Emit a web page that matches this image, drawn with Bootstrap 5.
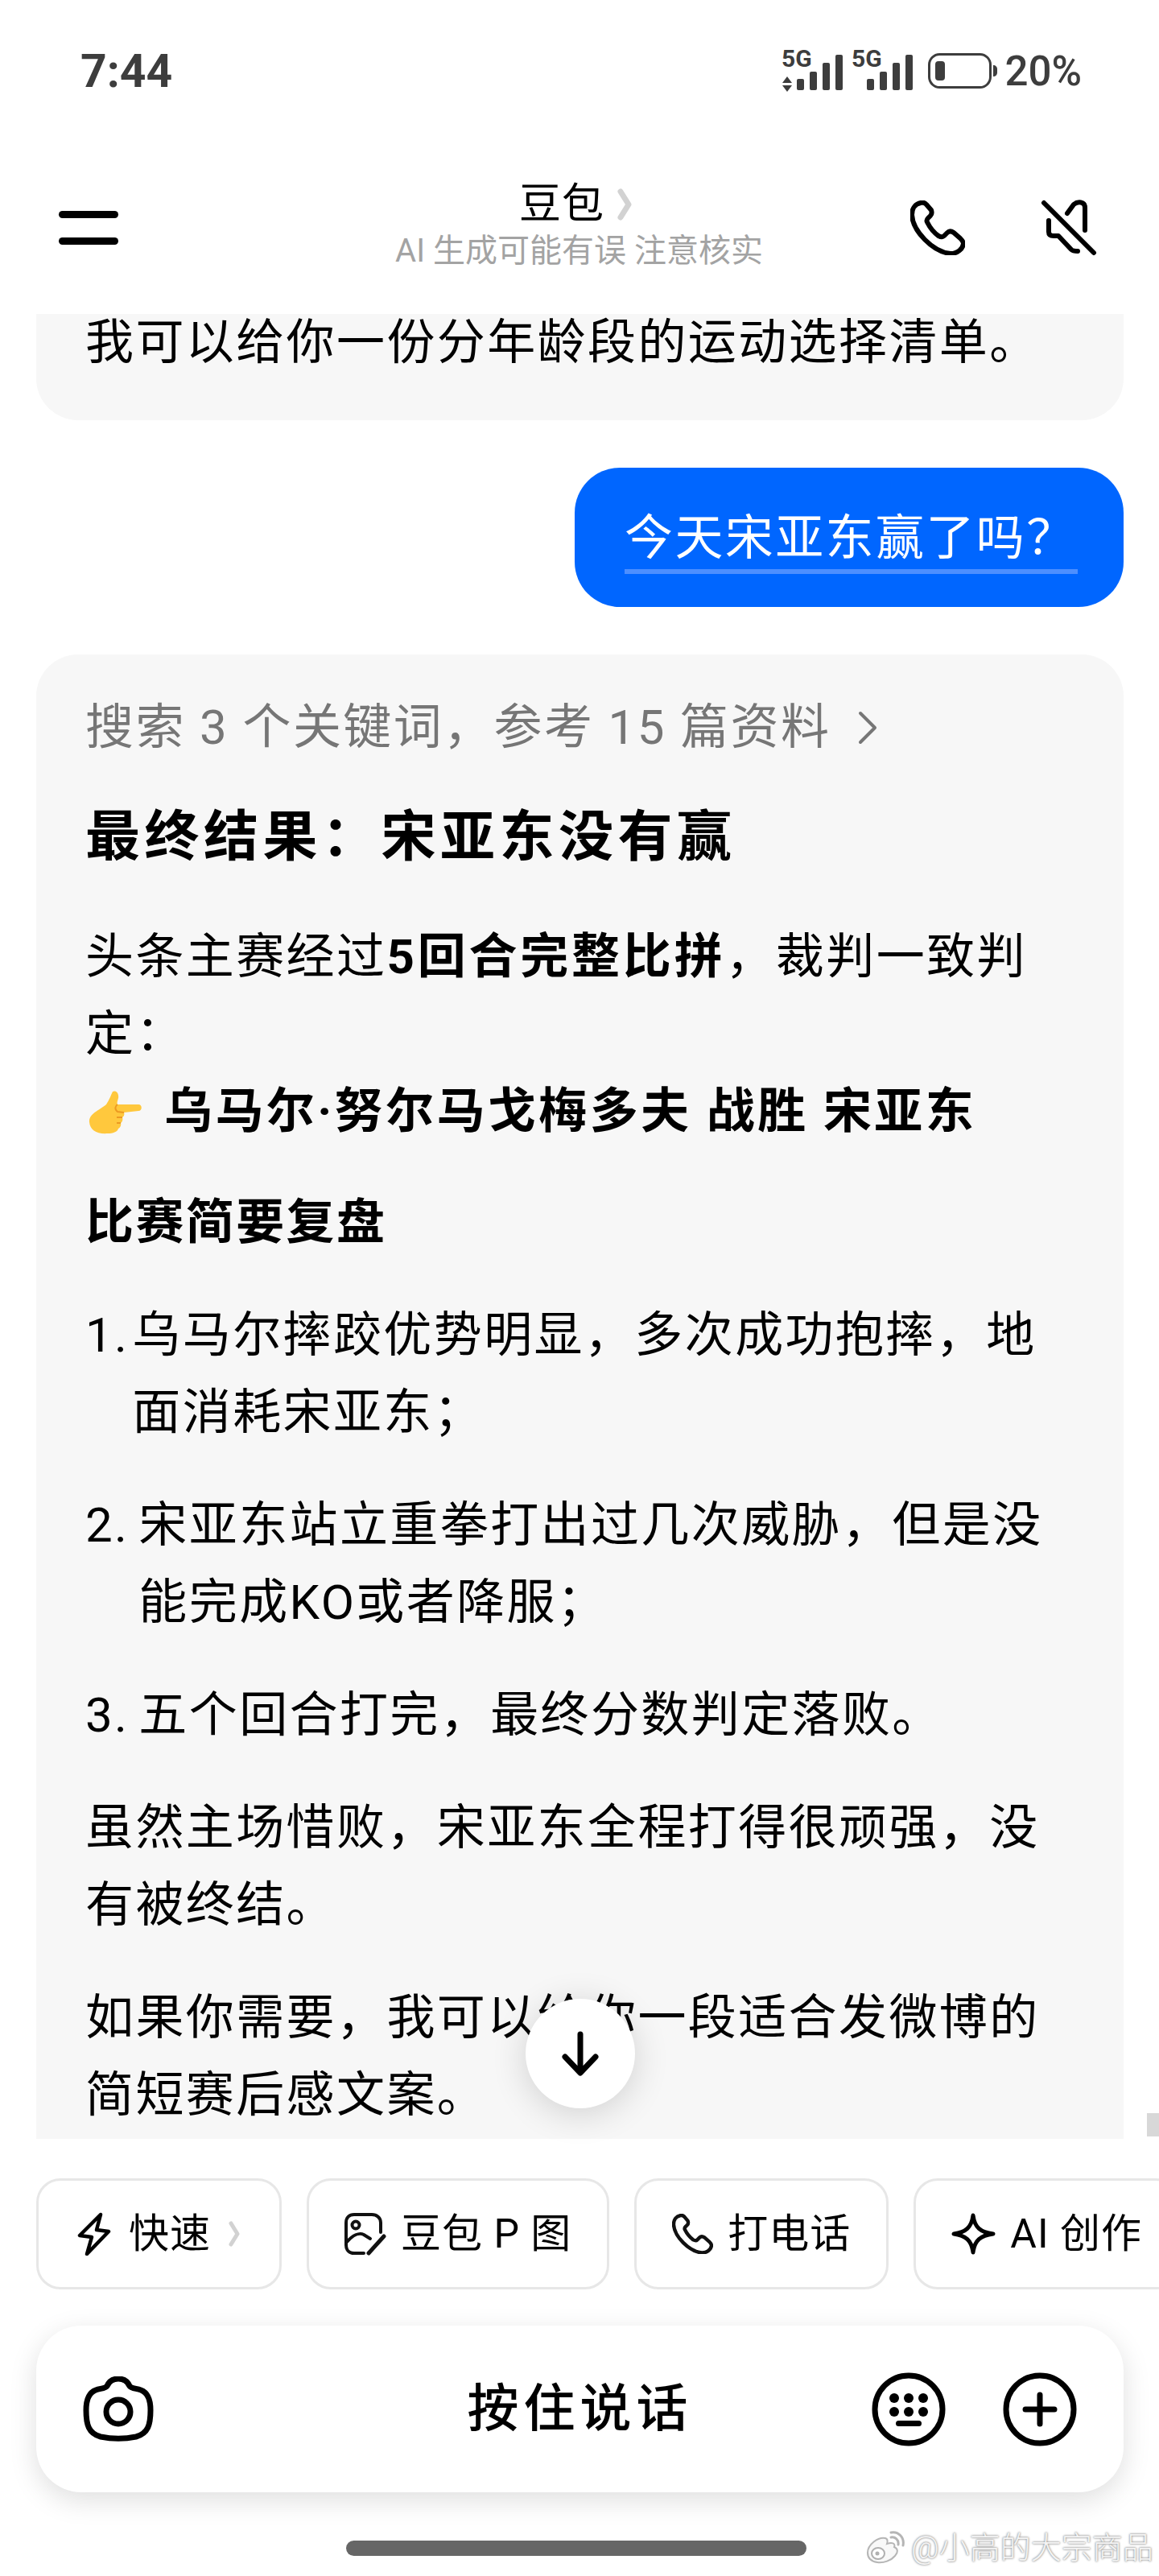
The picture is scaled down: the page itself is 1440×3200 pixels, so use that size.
<!DOCTYPE html>
<html lang="zh-CN">
<head>
    <meta charset="UTF-8">
    <meta name="viewport" content="width=device-width, initial-scale=1.0">
    <title>豆包</title>
    <link rel="stylesheet" href="https://cdn.jsdelivr.net/npm/bootstrap@5.3.0/dist/css/bootstrap.min.css">
    <script src="https://cdn.jsdelivr.net/npm/bootstrap@5.3.0/dist/js/bootstrap.bundle.min.js"></script>

    <style>
        body {
            margin: 0;
            background-color: #fff;
            color: #000;
            font-family: Roboto, "Noto Sans CJK SC", sans-serif;
        }

        .phone-page {
            width: 1440px;
            height: 3200px;
        }

        /* status bar */
        .status-row {
            height: 176px;
            padding: 0 96px 0 100px;
            color: #3d3d3d;
            font-family: Roboto, sans-serif;
        }

        .clock-text {
            font-size: 57px;
            font-weight: 700;
            line-height: 1;
        }

        .battery-text {
            font-size: 51px;
            font-weight: 500;
            line-height: 1;
            margin-left: 9px;
        }

        .signal-icon {
            margin: -8px 18px 0 0;
        }

        /* header */
        .top-header {
            height: 214px;
            padding: 0 77px 0 73px;
            display: grid;
            grid-template-columns: 1fr auto 1fr;
            align-items: center;
        }

        .menu-bar {
            width: 74px;
            height: 9px;
            background: #000;
            border-radius: 5px;
        }

        .menu-bar + .menu-bar {
            margin-top: 24px;
        }

        .title-text {
            font-size: 52px;
            line-height: 64px;
            letter-spacing: 1px;
            margin-top: -6px;
            padding-right: 6px;
        }

        .sub-text {
            font-size: 40px;
            line-height: 52px;
            color: #a3a3a3;
            white-space: nowrap;
            padding-left: 3px;
        }

        .header-actions {
            gap: 94px;
        }

        /* chat */
        .chat-area {
            flex: 1 1 0;
            min-height: 0;
            padding: 0 44px 0 45px;
        }

        .chat-text {
            font-size: 60px;
            line-height: 96px;
            letter-spacing: 2.4px;
        }

        .old-bubble {
            margin-top: -12px;
            padding: 0 61px 48px;
            background: #f7f7f7;
            border-radius: 0 0 52px 52px;
        }

        .me-bubble {
            margin-top: 59px;
            width: 682px;
            height: 173px;
            padding: 44px 0 0 62px;
            background: #0066ff;
            color: #fff;
            border-radius: 56px;
            line-height: 88px;
        }

        .me-bubble-line {
            width: 563px;
            height: 6px;
            background: #4d8fff;
            margin-top: -6px;
        }

        .ai-bubble {
            margin-top: 59px;
            padding: 43px 66px 80px 61px;
            background: #f7f7f7;
            border-radius: 52px;
        }

        .search-row {
            color: #767676;
            gap: 34px;
        }

        .result-title {
            font-size: 68px;
            font-weight: 700;
            line-height: 96px;
            letter-spacing: 5.5px;
            margin: 40px 0 53px;
        }

        .ai-para {
            margin: 0 0 44px;
        }

        .result-para {
            margin-bottom: 42px;
        }

        .bold-run {
            font-weight: 700;
            letter-spacing: 3.8px;
        }

        .winner-run {
            font-weight: 700;
            letter-spacing: 3.4px;
        }

        .ai-item {
            margin-bottom: 44px;
            gap: 12px;
        }

        .item-one {
            margin-right: -8px;
        }

        .emoji-hand {
            margin: 0 28px 0 4px;
            vertical-align: -8px;
        }

        /* overlays */
        .down-button {
            left: 653px;
            top: 2483px;
            width: 136px;
            height: 136px;
            background: #fff;
            box-shadow: 0 6px 44px rgba(0, 0, 0, .16);
            z-index: 2;
        }

        .scroll-thumb {
            left: 1425px;
            top: 2625px;
            width: 15px;
            height: 29px;
            background: #d8d8d8;
        }

        /* bottom */
        .bottom-tools {
            padding-bottom: 25px;
        }

        .tool-row {
            margin-top: 49px;
            padding-left: 45px;
            gap: 31px;
            height: 138px;
        }

        .tool-chip {
            flex: 0 0 auto;
            height: 138px;
            padding: 0 44px;
            gap: 18px;
            border: 3px solid #e7e7e7;
            border-radius: 30px;
            font-size: 50px;
            line-height: 1;
            letter-spacing: 1px;
            white-space: nowrap;
        }

        .chip-first {
            padding: 0 49px 0 48px;
            gap: 22px;
        }

        .input-bar {
            margin: 45px 44px 0 45px;
            height: 207px;
            padding: 0 58px;
            display: grid;
            grid-template-columns: 1fr auto 1fr;
            align-items: center;
            background: #fff;
            border-radius: 56px;
            box-shadow: 0 10px 34px rgba(0, 0, 0, .13);
        }

        .talk-text {
            font-size: 64px;
            font-weight: 500;
            letter-spacing: 6px;
            line-height: 1;
        }

        .input-actions {
            gap: 71px;
        }

        .home-pill {
            width: 572px;
            height: 19px;
            margin: 60px 0 0 430px;
            background: #666;
            border-radius: 10px;
        }

        .watermark {
            left: 1074px;
            top: 3142px;
            gap: 6px;
            font-size: 38px;
            line-height: 46px;
            font-weight: 300;
            color: #f4f4f4;
            text-shadow: 0 0 3px #8a8a8a, 0 0 2px #a0a0a0;
            white-space: nowrap;
        }
    </style>
</head>
<body>
    <div class="phone-page d-flex flex-column position-relative overflow-hidden">
        <!-- Status bar -->
        <div class="status-row d-flex align-items-center justify-content-between flex-shrink-0">
            <div class="clock-text">7:44</div>
            <div class="d-flex align-items-center">
                <svg class="signal-icon" width="164" height="60" viewBox="0 -8 164 60" fill="#3d3d3d">
                    <text x="0" y="21" font-family="Roboto, sans-serif" font-weight="700" font-size="30">5G</text>
                    <path d="M7 33 L13 41 H1 Z M1 44 H13 L7 52 Z"/>
                    <rect x="19" y="36" width="9" height="14" rx="2"/>
                    <rect x="35" y="27" width="9" height="23" rx="2"/>
                    <rect x="51" y="16" width="9" height="34" rx="2"/>
                    <rect x="67" y="6" width="9" height="44" rx="2"/>
                    <text x="87" y="21" font-family="Roboto, sans-serif" font-weight="700" font-size="30">5G</text>
                    <rect x="106" y="36" width="9" height="14" rx="2"/>
                    <rect x="122" y="27" width="9" height="23" rx="2"/>
                    <rect x="138" y="16" width="9" height="34" rx="2"/>
                    <rect x="154" y="6" width="9" height="44" rx="2"/>
                </svg>
                <svg width="86" height="44" viewBox="0 0 86 44">
                    <rect x="1.5" y="1.5" width="76" height="41" rx="13" fill="none" stroke="#3d3d3d" stroke-width="3"/>
                    <rect x="9" y="10" width="12" height="24" rx="4" fill="#3d3d3d"/>
                    <path d="M81 15 C84 15 86 17 86 20 V24 C86 27 84 29 81 29 Z" fill="#3d3d3d"/>
                </svg>
                <span class="battery-text">20%</span>
            </div>
        </div>

        <!-- Header -->
        <div class="top-header flex-shrink-0">
            <div>
                <div class="menu-bar"></div>
                <div class="menu-bar"></div>
            </div>
            <div class="text-center">
                <div class="title-text d-flex align-items-center justify-content-center gap-3">
                    <span>豆包</span>
                    <svg width="18" height="40" viewBox="0 0 18 40" fill="none" stroke="#d2d2d2" stroke-width="7" stroke-linecap="round" stroke-linejoin="round"><path d="M4 4 L14 20 L4 36"/></svg>
                </div>
                <div class="sub-text">AI 生成可能有误 注意核实</div>
            </div>
            <div class="header-actions d-flex justify-content-end align-items-center">
                <svg width="68" height="68" viewBox="0 0 68 68" fill="none" stroke="#000" stroke-width="6" stroke-linejoin="round">
                    <path d="M13 3 C7 4 2 9 2 18 C3 38 28 64 50 66 C59 66 65 60 66 54 C66 51 64 49 62 47 L54 40 C51 38 48 38 46 40 L42 44 C40 46 37 45 35 44 C28 39 24 33 21 27 C20 25 21 23 22 22 L25 19 C27 17 27 15 26 12 L20 5 C18 3 16 2 13 3 Z"/>
                </svg>
                <svg width="70" height="70" viewBox="0 0 70 70" fill="none" stroke="#000" stroke-width="6" stroke-linecap="round" stroke-linejoin="round">
                    <path d="M33 17 L41 6 C46 2 55 2 55 10 V38"/>
                    <path d="M10 26 V40 C10 44 13 45 16 45 H22 L38 62 C40 64 44 64 46 64"/>
                    <path d="M4 4 L66 66"/>
                </svg>
            </div>
        </div>

        <!-- Chat -->
        <div class="chat-area overflow-hidden">
            <div class="old-bubble chat-text">我可以给你一份分年龄段的运动选择清单。</div>

            <div class="d-flex justify-content-end">
                <div class="me-bubble chat-text">
                    <div>今天宋亚东赢了吗？</div>
                    <div class="me-bubble-line"></div>
                </div>
            </div>

            <div class="ai-bubble chat-text">
                <div class="search-row d-flex align-items-center">
                    <span>搜索 3 个关键词，参考 15 篇资料</span>
                    <svg width="24" height="42" viewBox="0 0 24 42" fill="none" stroke="#767676" stroke-width="4" stroke-linecap="round" stroke-linejoin="round"><path d="M3 3 L21 21 L3 39"/></svg>
                </div>

                <div class="result-title">最终结果：宋亚东没有赢</div>

                <p class="ai-para result-para">头条主赛经过<span class="bold-run">5回合完整比拼</span>，裁判一致判定：<br>
                    <span class="winner-run"><svg class="emoji-hand" width="66" height="55" viewBox="0 0 66 55">
                        <path d="M22 18 C26 12 28 6 30 2 C34 0 38 4 37 10 C36 14 35 16 36 18 L62 18 C67 18 67 26 62 26 L44 28 C45 30 44 33 42 34 C43 37 42 40 40 41 C41 44 39 47 37 48 C36 52 30 54 24 54 C10 55 2 50 1 40 C0 30 12 26 22 18 Z" fill="#ffc83d"/>
                        <path d="M36 18 C33 20 32 24 36 27 L44 28 M42 34 L35 34 M40 41 L35 41" fill="none" stroke="#ec9a22" stroke-width="2"/>
                    </svg>乌马尔·努尔马戈梅多夫 战胜 宋亚东</span></p>

                <p class="ai-para fw-bold">比赛简要复盘</p>

                <div class="ai-item d-flex"><span class="item-one">1.</span><span>乌马尔摔跤优势明显，多次成功抱摔，地面消耗宋亚东；</span></div>
                <div class="ai-item d-flex"><span>2.</span><span>宋亚东站立重拳打出过几次威胁，但是没能完成KO或者降服；</span></div>
                <div class="ai-item d-flex"><span>3.</span><span>五个回合打完，最终分数判定落败。</span></div>

                <p class="ai-para">虽然主场惜败，宋亚东全程打得很顽强，没有被终结。</p>
                <p class="ai-para">如果你需要，我可以给你一段适合发微博的简短赛后感文案。</p>
            </div>
        </div>

        <!-- Bottom tools -->
        <div class="bottom-tools flex-shrink-0">
            <div class="tool-row d-flex overflow-hidden">
                <div class="tool-chip chip-first d-flex align-items-center">
                    <svg width="42" height="54" viewBox="0 0 42 54" fill="none" stroke="#000" stroke-width="4.5" stroke-linejoin="round"><path d="M29 3 L3 29 L18 31 L12 52 L39 24 L24 22 Z"/></svg>
                    <span>快速</span>
                    <svg width="14" height="32" viewBox="0 0 14 32" fill="none" stroke="#d2d2d2" stroke-width="5" stroke-linecap="round" stroke-linejoin="round"><path d="M3 3 L11 16 L3 29"/></svg>
                </div>
                <div class="tool-chip d-flex align-items-center">
                    <svg width="52" height="53" viewBox="0 0 52 53" fill="none" stroke="#111" stroke-width="4" stroke-linecap="round">
                        <path d="M24 50 H12 C6 50 2 46 2 40 V12 C2 6 6 2 12 2 H34 C40 2 45 6 45 12 V24"/>
                        <circle cx="14" cy="15" r="4.5"/>
                        <path d="M3 36 C10 28 18 24 24 27 L32 32"/>
                        <path d="M30 50 L49 29" stroke-width="5"/>
                    </svg>
                    <span>豆包 P 图</span>
                </div>
                <div class="tool-chip d-flex align-items-center">
                    <svg width="51" height="50" viewBox="0 0 68 68" fill="none" stroke="#111" stroke-width="6" stroke-linejoin="round">
                        <path d="M13 3 C7 4 2 9 2 18 C3 38 28 64 50 66 C59 66 65 60 66 54 C66 51 64 49 62 47 L54 40 C51 38 48 38 46 40 L42 44 C40 46 37 45 35 44 C28 39 24 33 21 27 C20 25 21 23 22 22 L25 19 C27 17 27 15 26 12 L20 5 C18 3 16 2 13 3 Z"/>
                    </svg>
                    <span>打电话</span>
                </div>
                <div class="tool-chip d-flex align-items-center">
                    <svg width="55" height="52" viewBox="0 0 55 52" fill="none" stroke="#000" stroke-width="5" stroke-linejoin="round"><path d="M27 3 C29 18 36 24 52 26 C36 28 29 34 27 49 C25 34 18 28 3 26 C18 24 25 18 27 3 Z"/></svg>
                    <span>AI 创作</span>
                </div>
            </div>

            <div class="input-bar">
                <div>
                    <svg width="88" height="81" viewBox="0 0 88 81" fill="none" stroke="#000" stroke-width="7" stroke-linejoin="round">
                        <path d="M30 12 C33 5 38 3 44 3 C50 3 55 5 58 12 C60 15 66 15 72 17 C80 20 84 28 84 42 C84 60 81 71 66 75 C52 78 36 78 22 75 C7 71 4 60 4 42 C4 28 8 20 16 17 C22 15 28 15 30 12 Z"/>
                        <ellipse cx="44" cy="44" rx="15" ry="15"/>
                    </svg>
                </div>
                <div class="talk-text">按住说话</div>
                <div class="input-actions d-flex justify-content-end">
                    <svg width="92" height="92" viewBox="0 0 92 92" fill="none" stroke="#000" stroke-width="7">
                        <circle cx="46" cy="46" r="42"/>
                        <g fill="#000" stroke="none">
                            <circle cx="28" cy="32" r="6"/><circle cx="46" cy="32" r="6"/><circle cx="64" cy="32" r="6"/>
                            <circle cx="28" cy="49" r="6"/><circle cx="46" cy="49" r="6"/><circle cx="64" cy="49" r="6"/>
                            <rect x="30" y="60" width="32" height="7" rx="3.5"/>
                        </g>
                    </svg>
                    <svg width="92" height="92" viewBox="0 0 92 92" fill="none" stroke="#000" stroke-width="7" stroke-linecap="round">
                        <circle cx="46" cy="46" r="42"/>
                        <path d="M46 28 V64 M28 46 H64"/>
                    </svg>
                </div>
            </div>

            <div class="home-pill"></div>
        </div>

        <!-- Overlays -->
        <div class="down-button position-absolute rounded-circle d-flex align-items-center justify-content-center">
            <svg width="46" height="56" viewBox="0 0 46 56" fill="none" stroke="#000" stroke-width="7" stroke-linecap="round" stroke-linejoin="round"><path d="M23 4 V50 M4 32 L23 52 L42 32"/></svg>
        </div>
        <div class="scroll-thumb position-absolute"></div>
        <div class="watermark position-absolute d-flex align-items-center">
            <svg width="52" height="42" viewBox="0 0 52 42">
                <path d="M4 27 C4 17 17 7 26 9 C29 10 29 13 28 16 C34 14 39 15 37 20 C42 22 42 27 38 31 C33 37 24 40 16 39 C9 38 4 34 4 27 Z" fill="#f8f8f8" stroke="#b5b5b5" stroke-width="2"/>
                <ellipse cx="17" cy="28" rx="8" ry="7" fill="#fff" stroke="#b0b0b0" stroke-width="2"/>
                <circle cx="16" cy="28" r="2.5" fill="#b0b0b0"/>
                <path d="M33 8 C38 7 43 11 42 17 M33 2 C42 0 50 8 48 18" fill="none" stroke="#b5b5b5" stroke-width="3" stroke-linecap="round"/>
            </svg>
            <span>@小高的大宗商品</span>
        </div>
    </div>
</body>
</html>
